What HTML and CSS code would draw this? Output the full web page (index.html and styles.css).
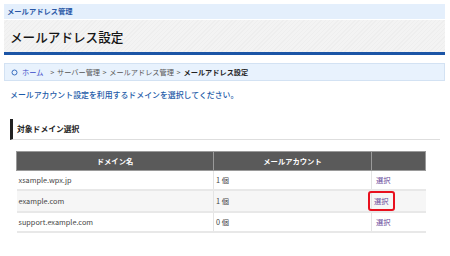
FILE: index.html
```html
<!DOCTYPE html>
<html lang="ja">
<head>
  <meta charset="UTF-8">
  <title>メールアドレス設定</title>
  <link rel="stylesheet" href="styles.css">
</head>
<body>
  <div class="topbar">メールアドレス管理</div>

  <div class="cabecera">
    <h1>メールアドレス設定</h1>
  </div>

  <div class="migas">
    <svg class="icono" width="7" height="7" viewBox="0 0 7 7"><circle cx="3.5" cy="3.5" r="2.5" fill="none" stroke="#3a6fc0" stroke-width="1"/></svg>
    <a href="#" class="inicio">ホーム</a>
    <span class="sep">&gt; サーバー管理 &gt; メールアドレス管理 &gt;</span>
    <strong>メールアドレス設定</strong>
  </div>

  <p class="aviso">メールアカウント設定を利用するドメインを選択してください。</p>

  <div class="seccion">対象ドメイン選択</div>

  <table class="dominios">
    <thead>
      <tr>
        <th class="col-dominio">ドメイン名</th>
        <th class="col-cuenta">メールアカウント</th>
        <th class="col-accion"></th>
      </tr>
    </thead>
    <tbody>
      <tr>
        <td>xsample.wpx.jp</td>
        <td>1 個</td>
        <td><a href="#">選択</a></td>
      </tr>
      <tr class="par">
        <td>example.com</td>
        <td>1 個</td>
        <td><a href="#" class="marcado">選択</a></td>
      </tr>
      <tr>
        <td>support.example.com</td>
        <td>0 個</td>
        <td><a href="#">選択</a></td>
      </tr>
    </tbody>
  </table>
</body>
</html>
```

FILE: styles.css
```css
body {
  margin: 0;
  font-family: "Noto Sans CJK JP", "Noto Sans", sans-serif;
  background: #fff;
  color: #333;
}

.topbar {
  margin: 4px 5px 0 4px;
  height: 15px;
  line-height: 15px;
  padding-left: 3px;
  background: #e4effc;
  color: #2a58a6;
  font-size: 7.3px;
  font-weight: bold;
}

.cabecera {
  margin: 1px 5px 0 4px;
  height: 32px;
  border-bottom: 3px solid #1b55a6;
  background: repeating-linear-gradient(135deg, #f3f3f3 0, #f3f3f3 2px, #eeeeee 2px, #eeeeee 3px);
}

.cabecera h1 {
  margin: 0;
  padding-left: 6px;
  line-height: 33px;
  font-size: 12.6px;
  font-weight: 500;
  color: #151515;
}

.migas {
  margin: 8px 5px 0 4px;
  height: 16px;
  border: 1px solid #d3e2f3;
  background: #e8f2fd;
  display: flex;
  align-items: center;
  gap: 3px;
  padding-left: 6px;
  font-size: 7.2px;
  color: #555;
  word-spacing: 1px;
}

.icono {
  margin-right: 1px;
}

.inicio {
  color: #3848c8;
  text-decoration: none;
  margin-right: 4px;
}

.migas strong {
  color: #222;
}

.aviso {
  margin: 7px 0 0 10px;
  font-size: 7.9px;
  font-weight: 500;
  color: #1c5aa8;
  line-height: 14px;
}

.seccion {
  margin: 17px 10px 0 10px;
  height: 20px;
  line-height: 20px;
  border-left: 3px solid #222;
  border-bottom: 1px solid #dedede;
  padding-left: 4px;
  font-size: 7.8px;
  font-weight: bold;
  color: #222;
}

.dominios {
  margin: 11px 0 0 16px;
  width: 410px;
  border-collapse: collapse;
  font-size: 7.3px;
}

.dominios th {
  height: 18px;
  background: #5a5a5a;
  color: #fff;
  font-weight: bold;
  border: 1px solid #9a9a9a;
  padding: 0;
}

.col-dominio {
  width: 196px;
}

.col-cuenta {
  width: 157px;
}

.dominios td {
  height: 18px;
  padding: 0 0 0 2px;
  border-bottom: 2px solid #e8e8e8;
  border-right: 1px solid #e4e4e4;
  color: #444;
}

.dominios td:last-child {
  border-right: none;
  padding-left: 4px;
}

.dominios tr.par td {
  background: #f6f6f6;
}

.dominios a {
  color: #6a4c9c;
  text-decoration: none;
}

.marcado {
  display: inline-block;
  padding: 4px 4px;
  margin-left: -8px;
  border: 2px solid #e8101e;
  border-radius: 3px;
  line-height: 8px;
}
```
